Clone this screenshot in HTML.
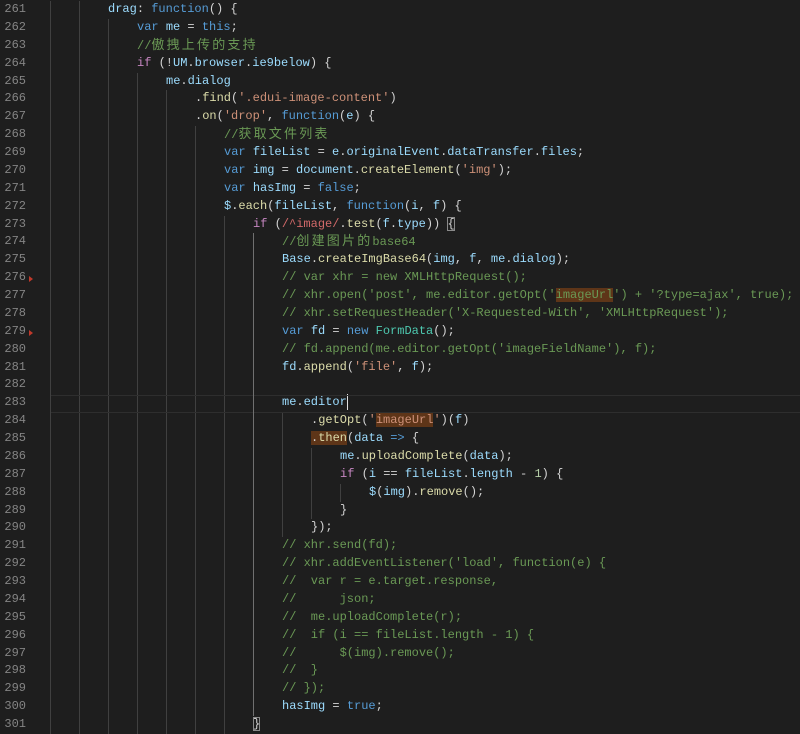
<!DOCTYPE html>
<html><head><meta charset="utf-8"><style>
html,body{margin:0;padding:0;background:#1e1e1e;width:800px;height:732px;overflow:hidden}
#ed{position:absolute;left:0;top:1px;width:800px;font-family:"Liberation Mono","Noto Sans CJK SC",monospace;font-size:12px;color:#d4d4d4}
.ln{position:relative;height:17.88px;line-height:17.88px;white-space:pre;padding-left:calc(50px + 29px*var(--l));
background-image:repeating-linear-gradient(to right,#404040 0 1px,transparent 1px 29px);
background-size:calc(29px*var(--l)) 100%;background-position:50px 0;background-repeat:no-repeat}
.no{position:absolute;left:0;width:26px;text-align:right;color:#858585;padding:0}
.k{color:#569cd6}.c{color:#c586c0}.v{color:#9cdcfe}.f{color:#dcdcaa}.s{color:#ce9178}.m{color:#6a9955}.t{color:#4ec9b0}.r{color:#d16969}.n{color:#b5cea8}
.h{background:#5e3518}
.cj{font-size:13px;letter-spacing:2.2px}
.bx{outline:1px solid #8a8a8a;outline-offset:-1px}
.cur{display:inline-block;width:1px;height:16px;background:#e0e0e0;vertical-align:middle}
.tri{position:absolute;left:29px;width:0;height:0;border-left:4px solid #c0392b;border-top:3px solid transparent;border-bottom:3px solid transparent;top:7px}
</style></head><body>
<div id="ed">
<div class="ln" style="--l:2"><span class="no">261</span><span class="v">drag</span>: <span class="k">function</span>() {</div>
<div class="ln" style="--l:3"><span class="no">262</span><span class="k">var</span> <span class="v">me</span> = <span class="k">this</span>;</div>
<div class="ln" style="--l:3"><span class="no">263</span><span class="m">//<span class="cj">傲拽上传的支持</span></span></div>
<div class="ln" style="--l:3"><span class="no">264</span><span class="c">if</span> (!<span class="v">UM</span>.<span class="v">browser</span>.<span class="v">ie9below</span>) {</div>
<div class="ln" style="--l:4"><span class="no">265</span><span class="v">me</span>.<span class="v">dialog</span></div>
<div class="ln" style="--l:5"><span class="no">266</span>.<span class="f">find</span>(<span class="s">'.edui-image-content'</span>)</div>
<div class="ln" style="--l:5"><span class="no">267</span>.<span class="f">on</span>(<span class="s">'drop'</span>, <span class="k">function</span>(<span class="v">e</span>) {</div>
<div class="ln" style="--l:6"><span class="no">268</span><span class="m">//<span class="cj">获取文件列表</span></span></div>
<div class="ln" style="--l:6"><span class="no">269</span><span class="k">var</span> <span class="v">fileList</span> = <span class="v">e</span>.<span class="v">originalEvent</span>.<span class="v">dataTransfer</span>.<span class="v">files</span>;</div>
<div class="ln" style="--l:6"><span class="no">270</span><span class="k">var</span> <span class="v">img</span> = <span class="v">document</span>.<span class="f">createElement</span>(<span class="s">'img'</span>);</div>
<div class="ln" style="--l:6"><span class="no">271</span><span class="k">var</span> <span class="v">hasImg</span> = <span class="k">false</span>;</div>
<div class="ln" style="--l:6"><span class="no">272</span><span class="v">$</span>.<span class="f">each</span>(<span class="v">fileList</span>, <span class="k">function</span>(<span class="v">i</span>, <span class="v">f</span>) {</div>
<div class="ln" style="--l:7"><span class="no">273</span><span class="c">if</span> (<span class="r">/^image/</span>.<span class="f">test</span>(<span class="v">f</span>.<span class="v">type</span>)) <span class="bx">{</span></div>
<div class="ln" style="--l:8"><span class="no">274</span><span class="m">//<span class="cj">创建图片的</span>base64</span></div>
<div class="ln" style="--l:8"><span class="no">275</span><span class="v">Base</span>.<span class="f">createImgBase64</span>(<span class="v">img</span>, <span class="v">f</span>, <span class="v">me</span>.<span class="v">dialog</span>);</div>
<div class="ln" style="--l:8"><span class="no">276</span><span class="tri"></span><span class="m">// var xhr = new XMLHttpRequest();</span></div>
<div class="ln" style="--l:8"><span class="no">277</span><span class="m">// xhr.open('post', me.editor.getOpt('<span class="h">imageUrl</span>') + '?type=ajax', true);</span></div>
<div class="ln" style="--l:8"><span class="no">278</span><span class="m">// xhr.setRequestHeader('X-Requested-With', 'XMLHttpRequest');</span></div>
<div class="ln" style="--l:8"><span class="no">279</span><span class="tri"></span><span class="k">var</span> <span class="v">fd</span> = <span class="k">new</span> <span class="t">FormData</span>();</div>
<div class="ln" style="--l:8"><span class="no">280</span><span class="m">// fd.append(me.editor.getOpt('imageFieldName'), f);</span></div>
<div class="ln" style="--l:8"><span class="no">281</span><span class="v">fd</span>.<span class="f">append</span>(<span class="s">'file'</span>, <span class="v">f</span>);</div>
<div class="ln" style="--l:8"><span class="no">282</span></div>
<div class="ln" style="--l:8"><span class="no">283</span><span class="v">me</span>.<span class="v">editor</span><span class="cur"></span></div>
<div class="ln" style="--l:9"><span class="no">284</span>.<span class="f">getOpt</span>(<span class="s">'<span class="h">imageUrl</span>'</span>)(<span class="v">f</span>)</div>
<div class="ln" style="--l:9"><span class="no">285</span><span class="h">.<span class="f">then</span></span>(<span class="v">data</span> <span class="k">=&gt;</span> {</div>
<div class="ln" style="--l:10"><span class="no">286</span><span class="v">me</span>.<span class="f">uploadComplete</span>(<span class="v">data</span>);</div>
<div class="ln" style="--l:10"><span class="no">287</span><span class="c">if</span> (<span class="v">i</span> == <span class="v">fileList</span>.<span class="v">length</span> - <span class="n">1</span>) {</div>
<div class="ln" style="--l:11"><span class="no">288</span><span class="v">$</span>(<span class="v">img</span>).<span class="f">remove</span>();</div>
<div class="ln" style="--l:10"><span class="no">289</span>}</div>
<div class="ln" style="--l:9"><span class="no">290</span>});</div>
<div class="ln" style="--l:8"><span class="no">291</span><span class="m">// xhr.send(fd);</span></div>
<div class="ln" style="--l:8"><span class="no">292</span><span class="m">// xhr.addEventListener('load', function(e) {</span></div>
<div class="ln" style="--l:8"><span class="no">293</span><span class="m">//  var r = e.target.response,</span></div>
<div class="ln" style="--l:8"><span class="no">294</span><span class="m">//      json;</span></div>
<div class="ln" style="--l:8"><span class="no">295</span><span class="m">//  me.uploadComplete(r);</span></div>
<div class="ln" style="--l:8"><span class="no">296</span><span class="m">//  if (i == fileList.length - 1) {</span></div>
<div class="ln" style="--l:8"><span class="no">297</span><span class="m">//      $(img).remove();</span></div>
<div class="ln" style="--l:8"><span class="no">298</span><span class="m">//  }</span></div>
<div class="ln" style="--l:8"><span class="no">299</span><span class="m">// });</span></div>
<div class="ln" style="--l:8"><span class="no">300</span><span class="v">hasImg</span> = <span class="k">true</span>;</div>
<div class="ln" style="--l:7"><span class="no">301</span><span class="bx">}</span></div>
</div>
<div style="position:absolute;left:51px;right:0;top:395px;height:16px;border-top:1px solid #2e2e2e;border-bottom:1px solid #2e2e2e"></div>
<div style="position:absolute;left:253px;width:1px;top:233px;height:483px;background:#707070"></div>
</body></html>
